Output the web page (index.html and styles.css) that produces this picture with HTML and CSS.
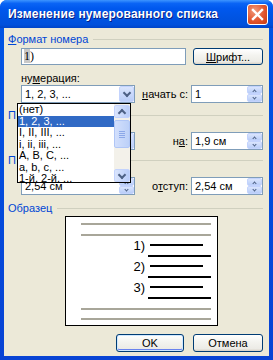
FILE: index.html
```html
<!DOCTYPE html>
<html lang="ru">
  <head>
    <meta charset="UTF-8" />
    <title>Изменение нумерованного списка</title>
    <link rel="stylesheet" href="styles.css">
  </head>
  <body>
    <div class="window">
      <!-- Title bar -->
      <div class="titlebar">
        <span class="title">Изменение нумерованного списка</span>
        <span class="close">
          <svg width="21" height="21" viewBox="0 0 21 21">
            <path d="M6 6 L15 15 M15 6 L6 15" stroke="#fff" stroke-width="2.4" stroke-linecap="square" />
          </svg>
        </span>
      </div>

      <div class="client">
        <!-- Number format -->
        <div class="group"><span class="glabel"><u>Ф</u>ормат номера</span></div>
        <div class="row format-row">
          <div class="field format"><span class="hl">1</span>)</div>
          <div class="btn font-btn"><u>Ш</u>рифт...</div>
        </div>
        <div class="sub">ну<u>м</u>ерация:</div>
        <div class="row">
          <div class="col-left">
            <div class="combo">1, 2, 3, ...<span class="drop"><i class="chev down"></i></span></div>
          </div>
          <div class="col-right">
            <span class="lbl"><u>н</u>ачать с:</span>
            <div class="spin">1<span class="spin-btns"><b><i class="chev up sm"></i></b><b><i class="chev down sm"></i></b></span></div>
          </div>
        </div>

        <!-- Number position (mostly under the open list) -->
        <div class="group g2"><span class="glabel">П</span></div>
        <div class="row r2">
          <div class="col-left">
            <div class="combo"><span class="drop"><i class="chev down"></i></span></div>
          </div>
          <div class="col-right">
            <span class="lbl">н<u>а</u>:</span>
            <div class="spin">1,9 см<span class="spin-btns"><b><i class="chev up sm"></i></b><b><i class="chev down sm"></i></b></span></div>
          </div>
        </div>

        <!-- Text position -->
        <div class="group g3"><span class="glabel">П</span></div>
        <div class="row r3">
          <div class="col-left">
            <div class="spin wide">2,54 см<span class="spin-btns"><b><i class="chev up sm"></i></b><b><i class="chev down sm"></i></b></span></div>
          </div>
          <div class="col-right">
            <span class="lbl">о<u>т</u>ступ:</span>
            <div class="spin">2,54 см<span class="spin-btns"><b><i class="chev up sm"></i></b><b><i class="chev down sm"></i></b></span></div>
          </div>
        </div>

        <!-- Sample -->
        <div class="group g4"><span class="glabel">Образец</span></div>
        <div class="preview">
          <div class="gline first"></div>
          <div class="gline"></div>
          <div class="item"><span class="num">1)</span><span class="bline short"></span></div>
          <div class="bline long"></div>
          <div class="item"><span class="num">2)</span><span class="bline short"></span></div>
          <div class="bline long"></div>
          <div class="item"><span class="num">3)</span><span class="bline short"></span></div>
          <div class="bline long"></div>
          <div class="gline"></div>
          <div class="gline last"></div>
        </div>

        <div class="buttons">
          <div class="btn default">OK</div>
          <div class="btn">Отмена</div>
        </div>

        <!-- Open dropdown list -->
        <div class="list">
          <div class="items">
            <div class="opt">(нет)</div>
            <div class="opt sel">1, 2, 3, ...</div>
            <div class="opt">I, II, III, ...</div>
            <div class="opt">i, ii, iii, ...</div>
            <div class="opt">A, B, C, ...</div>
            <div class="opt">a, b, c, ...</div>
            <div class="opt">1-й, 2-й, ...</div>
          </div>
          <div class="scroll">
            <span class="sbtn"><i class="chev up"></i></span>
            <span class="thumb"><em></em><em></em><em></em><em></em></span>
            <span class="track"></span>
            <span class="sbtn"><i class="chev down"></i></span>
          </div>
        </div>
      </div>
    </div>
  </body>
</html>
```

FILE: styles.css
```css
* {
  box-sizing: border-box;
}

body {
  margin: 0;
  background: #fff;
  font-family: "Liberation Sans", Arial, sans-serif;
  font-size: 11px;
  color: #000;
}

u {
  text-decoration: underline;
  text-underline-offset: 1px;
}

/* Window frame */
.window {
  width: 273px;
  height: 360px;
  background: linear-gradient(to bottom, #0055e5, #0843d4);
  border-radius: 7px 7px 0 0;
  display: flex;
  flex-direction: column;
  overflow: hidden;
}

.titlebar {
  height: 28px;
  display: flex;
  align-items: center;
  padding: 0 5px 0 8px;
  background: linear-gradient(to bottom, #3d95ff 0%, #0a64f5 12%, #0058ee 30%, #0054e3 60%, #0050dc 88%, #0044c8 100%);
}

.title {
  color: #fff;
  font-weight: bold;
  font-size: 12px;
  letter-spacing: 0.2px;
  text-shadow: 1px 1px 0 #0a1e84;
}

.close {
  margin-left: auto;
  width: 21px;
  height: 21px;
  border: 1px solid #fff;
  border-radius: 3px;
  background: radial-gradient(circle at 35% 30%, #f09a7c, #e2552e 55%, #c63a13);
  display: flex;
  align-items: center;
  justify-content: center;
}

.close svg {
  margin: -1px;
}

.client {
  position: relative;
  flex: 1;
  margin: 0 4px 4px 4px;
  padding: 5px 6px 0 4px;
  background: #ece9d8;
}

/* Group headers */
.group {
  display: flex;
  align-items: center;
  height: 13px;
  line-height: 13px;
}

.group::after {
  content: "";
  flex: 1;
  margin-left: 5px;
  border-top: 1px solid #d0d0bf;
}

.glabel {
  color: #0046d5;
}

.g2 {
  margin-top: 6px;
}

.g3 {
  margin-top: 4px;
}

.g4 {
  margin-top: 7px;
}

/* Rows */
.row {
  display: flex;
  align-items: center;
  margin-left: 13px;
}

.format-row {
  margin-top: 2px;
  gap: 7px;
}

.r2,
.r3 {
  margin-top: 10px;
}

.col-left {
  width: 114px;
}

.col-right {
  flex: 1;
  display: flex;
  align-items: center;
  justify-content: flex-end;
  gap: 3px;
}

.sub {
  margin: 7px 0 0 13px;
  height: 13px;
  line-height: 13px;
}

.field {
  background: #fff;
  border: 1px solid #7f9db9;
}

.format {
  width: 168px;
  height: 17px;
  padding-left: 2px;
  font-family: "Liberation Serif", "Times New Roman", serif;
  font-size: 12px;
  line-height: 15px;
}

.hl {
  background: #c8c8c8;
}

/* Buttons */
.btn {
  height: 17px;
  border: 1px solid #003c74;
  border-radius: 3px;
  background: linear-gradient(to bottom, #fff 0%, #f4f4f0 40%, #ecebe6 85%, #d6d0c5 100%);
  display: flex;
  align-items: center;
  justify-content: center;
}

.font-btn {
  width: 71px;
}

.buttons {
  display: flex;
  justify-content: flex-end;
  gap: 9px;
  margin-top: 8px;
}

.buttons .btn {
  width: 70px;
  height: 18px;
}

.buttons .default {
  width: 68px;
  box-shadow: inset 0 0 0 1px #cee7ff, inset 0 -1px 0 1px #6982ee;
}

/* Combo and spinner */
.combo {
  width: 114px;
  height: 18px;
  background: #fff;
  border: 1px solid #7f9db9;
  display: flex;
  align-items: center;
  padding-left: 3px;
}

.drop {
  margin-left: auto;
  width: 15px;
  height: 16px;
  border: 1px solid #c3d3fd;
  border-radius: 2px;
  background: linear-gradient(to bottom, #dae5fd, #b9cdf8);
  display: flex;
  align-items: center;
  justify-content: center;
}

.spin {
  width: 72px;
  height: 18px;
  background: #fff;
  border: 1px solid #7f9db9;
  display: flex;
  align-items: center;
  padding-left: 3px;
}

.spin.wide {
  width: 114px;
}

.spin-btns {
  margin-left: auto;
  width: 15px;
  height: 16px;
  display: flex;
  flex-direction: column;
}

.spin-btns b {
  flex: 1;
  border: 1px solid #c3d3fd;
  border-radius: 2px;
  background: linear-gradient(to bottom, #dae5fd, #b9cdf8);
  display: flex;
  align-items: center;
  justify-content: center;
}

.lbl {
  white-space: nowrap;
}

/* Chevrons */
.chev {
  display: block;
  width: 6px;
  height: 6px;
  border-right: 2px solid #4d6185;
  border-bottom: 2px solid #4d6185;
}

.chev.down {
  transform: translateY(-1px) rotate(45deg);
}

.chev.up {
  transform: translateY(1px) rotate(-135deg);
}

.chev.sm {
  width: 3px;
  height: 3px;
  border-width: 1px;
}

/* Sample preview */
.preview {
  margin: 1px 0 0 57px;
  width: 153px;
  height: 110px;
  background: #fff;
  border: 1px solid #000;
}

.gline {
  width: 130px;
  height: 2px;
  margin: 9px 0 0 15px;
  background: #a8a699;
}

.gline.first {
  margin-top: 6px;
}

.gline.last {
  margin-top: 8px;
}

.item {
  display: flex;
  align-items: center;
  height: 12px;
  margin-top: 3px;
}

.num {
  width: 80px;
  text-align: right;
  font-size: 13px;
  padding-right: 1px;
}

.bline {
  display: block;
  height: 2px;
  background: #000;
}

.bline.short {
  width: 53px;
  margin-left: 4px;
}

.bline.long {
  width: 63px;
  margin: 4px 0 0 82px;
}

/* Dropdown list overlay */
.list {
  position: absolute;
  left: 13px;
  top: 75px;
  width: 114px;
  height: 80px;
  background: #fff;
  border: 1px solid #000;
  display: flex;
  overflow: hidden;
}

.items {
  width: 96px;
}

.opt {
  height: 11.5px;
  line-height: 11.5px;
  padding-left: 1px;
  white-space: nowrap;
}

.opt.sel {
  background: #316ac5;
  color: #fff;
}

.scroll {
  width: 16px;
  display: flex;
  flex-direction: column;
  background: #f3f1ea;
}

.sbtn {
  height: 13px;
  margin-top: 1px;
  border: 1px solid #c3d3fd;
  border-radius: 2px;
  background: linear-gradient(to right, #dae5fd, #b9cdf8);
  display: flex;
  align-items: center;
  justify-content: center;
}

.thumb {
  height: 28px;
  margin-top: 2px;
  border: 1px solid #b0c6f6;
  border-radius: 2px;
  background: linear-gradient(to right, #d2dffc, #bcd0f8);
  display: flex;
  flex-direction: column;
  align-items: center;
  justify-content: center;
  gap: 1px;
}

.thumb em {
  width: 6px;
  height: 1px;
  background: #eef3fe;
  border-bottom: 1px solid #8ca8e8;
}

.track {
  flex: 1;
}
```
